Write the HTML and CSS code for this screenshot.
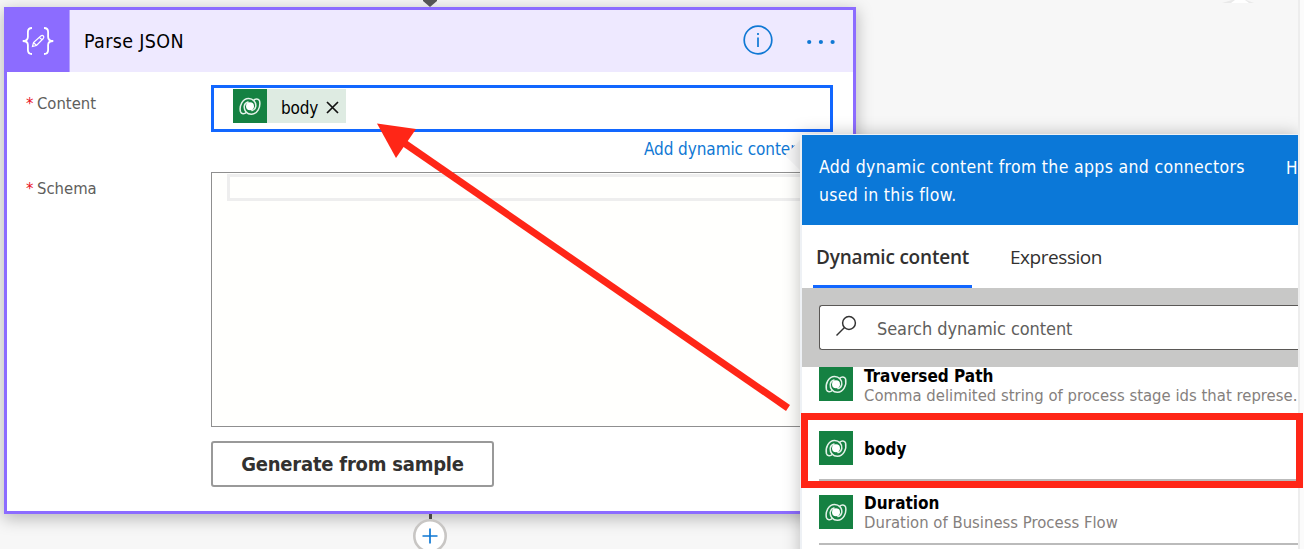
FILE: index.html
```html
<!DOCTYPE html>
<html lang="en">
<head>
<meta charset="utf-8">
<title>Parse JSON</title>
<link rel="stylesheet" href="styles.css">
</head>
<body>
<svg class="defs" width="0" height="0">
  <symbol id="dataverse" viewBox="0 0 34 34">
    <g fill="none" stroke="#e4f2e9" stroke-width="1.5" stroke-linecap="round" stroke-linejoin="round">
      <path id="swirl" d="M13.500 23.200C11.500 25.300 8.300 25.200 7.400 22.500C6.200 16.500 9.500 9.600 15.500 9.400C20 9.300 23.200 13 22.800 17.300C22.500 19.300 21 21 19 21.500"/>
      <use href="#swirl" transform="rotate(180 17 17.3)"/>
    </g>
    <circle cx="17" cy="17.300" r="4" fill="#fff"/>
  </symbol>
</svg>
<main class="canvas">
  <svg class="arrow-in" width="20" height="8" viewBox="0 0 20 8"><path d="M3 0h14v1L10 7 3 1z" fill="#555"/></svg>
  <svg class="arrow-up" width="34" height="3" viewBox="0 0 34 3"><path d="M0 3 10 0h14l8 3z" fill="#e9e9e9"/><path d="M9 3l4-3h10l4 3z" fill="#fff"/></svg>
  <section class="card">
    <header class="card-head">
      <div class="card-icon">
        <svg width="34" height="30" viewBox="0 0 34 30" fill="none" stroke="#fff" stroke-width="1.8">
          <path d="M11 2C7.500 2 6.900 3.500 6.900 6v5c0 2.500-1.500 4-5.200 4 3.700 0 5.200 1.500 5.200 4v5c0 2.500.6 4 4.100 4"/>
          <path d="M23 2c3.500 0 4.100 1.500 4.100 4v5c0 2.500 1.500 4 5.200 4-3.700 0-5.200 1.500-5.200 4v5c0 2.500-.6 4-4.100 4"/>
          <path d="M11.500 20.500l1-4 7.300-6.500c2-1.500 4 .6 2.500 2.500L15.500 19.500zM12.700 16.800l2.600 2.500M18.400 11.300l2.700 2.600" stroke-width="1.200"/>
        </svg>
      </div>
      <h1 class="card-title">Parse JSON</h1>
      <svg class="info" width="30" height="30" viewBox="0 0 30 30"><circle cx="15" cy="15" r="13.800" fill="none" stroke="#0f78d4" stroke-width="1.700"/><path d="M15 12.500v9.500M15 8v2" stroke="#0f78d4" stroke-width="1.700"/></svg>
      <svg class="more" width="30" height="6" viewBox="0 0 30 6" fill="#0f78d4"><circle cx="3.200" cy="3" r="2.100"/><circle cx="14.900" cy="3" r="2.100"/><circle cx="26.600" cy="3" r="2.100"/></svg>
    </header>
    <div class="fields">
      <div class="label first-label"><span class="star">*</span><span>Content</span></div>
      <div>
        <div class="input">
          <div class="token">
            <svg class="dv" width="34" height="34"><use href="#dataverse"/></svg>
            <span class="token-text">body</span>
            <svg width="13" height="13" viewBox="0 0 13 13"><path d="M1 1l11 11M12 1L1 12" stroke="#111" stroke-width="1.700"/></svg>
          </div>
        </div>
        <a class="add-link">Add dynamic content</a>
      </div>
      <div class="label"><span class="star">*</span><span>Schema</span></div>
      <div>
        <div class="schema"><div class="schema-line"></div></div>
        <button class="generate">Generate from sample</button>
      </div>
    </div>
  </section>
  <div class="connector">
    <div class="stem"></div>
    <svg width="34" height="34" viewBox="0 0 34 34"><circle cx="17" cy="17" r="15.700" fill="#fff" stroke="#c8c6c4" stroke-width="2.600"/><path d="M17 9.500v15M9.500 17h15" stroke="#0f78d4" stroke-width="1.700"/></svg>
  </div>

  <svg class="beak" width="18" height="36" viewBox="0 0 18 36"><path d="M18 2v34L1 19.500z" fill="#f7f7f8"/></svg>
  <aside class="panel">
    <div class="panel-head">
      <p class="intro">Add dynamic content from the apps and connectors<br>used in this flow.</p>
      <span class="hide">H</span>
    </div>
    <nav class="tabs">
      <span class="tab active">Dynamic content</span>
      <span class="tab">Expression</span>
    </nav>
    <div class="search-band">
      <div class="search">
        <svg width="22" height="22" viewBox="0 0 22 22" fill="none" stroke="#333" stroke-width="1.500"><circle cx="14" cy="8" r="6.400"/><path d="M9.500 12.500L1.500 20.500"/></svg>
        <span>Search dynamic content</span>
      </div>
    </div>
    <ul class="list">
      <li class="item first">
        <svg class="dv" width="34" height="34"><use href="#dataverse"/></svg>
        <div class="item-text"><b>Traversed Path</b><small>Comma delimited string of process stage ids that represe.</small></div>
      </li>
      <li class="item">
        <svg class="dv" width="34" height="34"><use href="#dataverse"/></svg>
        <div class="item-text"><b>body</b></div>
      </li>
      <li class="item">
        <svg class="dv" width="34" height="34"><use href="#dataverse"/></svg>
        <div class="item-text"><b>Duration</b><small>Duration of Business Process Flow</small></div>
      </li>
    </ul>
  </aside>
</main>
<div class="highlight"></div>
<svg class="pointer" width="1304" height="549" viewBox="0 0 1304 549"><path d="M788 408L402 141.500" stroke="#ff2617" stroke-width="7"/><path d="M377 123.500L416 129 396 158z" fill="#ff2617"/></svg>
</body>
</html>
```
FILE: styles.css
```css
* { box-sizing: border-box; }
body {
  margin: 0;
  width: 1304px;
  height: 549px;
  overflow: hidden;
  position: relative;
  background: #fbfbfb;
  font-family: "DejaVu Sans Condensed", "DejaVu Sans", sans-serif;
  font-stretch: condensed;
}
svg { display: block; flex: none; }
.defs { position: absolute; }
.canvas {
  position: relative;
  width: 1300px;
  height: 549px;
  padding: 7px 0 0 4px;
  overflow: hidden;
  background: #f7f7f7;
  border-right: 2px solid #ededed;
}
.arrow-in { position: absolute; left: 420px; top: 0; }
.arrow-up { position: absolute; left: 1222px; top: 0; }
.card {
  width: 852px;
  height: 507px;
  border: 3px solid #8c6cff;
  background: #fff;
  box-shadow: 0 4px 15px 1px rgba(0, 0, 0, .25);
}
.card-head {
  display: flex;
  align-items: center;
  height: 62px;
  padding-right: 17px;
  background: #eee9ff;
}
.card-icon {
  display: flex;
  align-items: center;
  justify-content: center;
  width: 63px;
  height: 62px;
  background: #8c6cff;
  border-right: 1px solid #b5a0ff;
}
.card-title {
  flex: 1;
  margin: 2px 0 0 14px;
  font-size: 19.500px;
  font-weight: 400;
  line-height: 24px;
  letter-spacing: .35px;
}
.info { margin-top: -2px; }
.more { margin: 1px 0 0 33px; }
.fields {
  display: grid;
  grid-template-columns: 185px 622px;
  row-gap: 12px;
  padding: 13px 0 0 19px;
}
.label {
  display: flex;
  gap: 3px;
  padding-top: 7px;
  font-size: 16.500px;
  line-height: 20px;
  color: #605e5c;
}
.label.first-label { padding-top: 9px; }
.star { width: 8px; color: #e81123; }
.input {
  height: 47px;
  padding: 1px 0 0 19px;
  border: 3px solid #1267ff;
}
.token {
  display: flex;
  align-items: center;
  width: 113px;
  height: 34px;
  background: #deebe2;
}
.token-text { flex: 1; margin: 3px 0 0 14px; font-size: 17px; letter-spacing: -.2px; }
.token svg:last-child { margin: 2px 7px 0 0; }
.dv { background: #158142; }
.add-link {
  display: block;
  height: 28px;
  margin-left: 433px;
  padding-top: 6px;
  font-size: 17px;
  line-height: 22px;
  letter-spacing: -.08px;
  color: #0f78d4;
  white-space: nowrap;
}
.schema {
  height: 255px;
  padding: 1px 0 0 15px;
  border: 1.500px solid #8f8f8f;
  background: #fffffd;
}
.schema-line { height: 27px; border: 3px solid #eee; border-right: 0; }
.generate {
  display: flex;
  align-items: center;
  justify-content: center;
  width: 283px;
  height: 46px;
  margin-top: 14px;
  padding: 0;
  border: 2px solid #999;
  border-radius: 3px;
  background: #fff;
  color: #323130;
  font-family: inherit;
  font-stretch: condensed;
  font-size: 20px;
  font-weight: 700;
  letter-spacing: -.22px;
}
.connector { width: 34px; margin-left: 409px; }
.stem { width: 3px; height: 5px; margin: 0 auto; background: #484644; }
.beak { position: absolute; left: 784px; top: 136px; }
.panel {
  position: absolute;
  left: 800px;
  top: 134px;
  width: 498px;
  height: 430px;
  border: 1px solid #eef1f5;
  border-width: 1px 0 0 2px;
  background: #fff;
  box-shadow: 0 0 16px rgba(0, 0, 0, .25);
  overflow: hidden;
}
.panel-head {
  display: flex;
  align-items: flex-start;
  justify-content: space-between;
  height: 90px;
  padding: 18px 0 0 17px;
  background: #0b78d8;
  color: #fff;
  line-height: 28px;
  font-size: 17.500px;
  letter-spacing: .33px;
  white-space: nowrap;
}
.intro { width: 466px; margin: 0; }
.hide { flex: none; width: 12px; padding-top: 1px; letter-spacing: 0; font-size: 17px; }
.tabs {
  display: flex;
  gap: 38px;
  height: 63px;
  padding: 14px 0 0 11px;
  background: #fff;
  color: #323130;
  font-family: "Open Sans", "Noto Sans", sans-serif;
  font-stretch: normal;
  font-size: 19px;
  line-height: 36px;
  letter-spacing: -.45px;
}
.tab { white-space: nowrap; }
.tab.active { width: 159px; padding-left: 3px; border-bottom: 3px solid #1267ff; font-weight: 600; letter-spacing: -.2px; }
.search-band { height: 79px; padding: 17px 0 0 17px; background: #c8c8c7; }
.search {
  display: flex;
  align-items: center;
  gap: 20px;
  height: 45px;
  padding-left: 15px;
  border: 1.500px solid #5a5856;
  border-right: 0;
  border-radius: 3px 0 0 3px;
  background: #fff;
  color: #605e5c;
  font-size: 18px;
  letter-spacing: -.08px;
  white-space: nowrap;
}
.search span { margin-top: 1px; }
.search svg { margin-top: -4px; }
.list { margin: 0; padding: 0 0 0 17px; list-style: none; }
.item {
  display: flex;
  align-items: center;
  gap: 11px;
  height: 64px;
  border-bottom: 2px solid #bbb;
}
.item.first { height: 50px; padding-bottom: 14px; }
.item-text { display: flex; flex-direction: column; padding-top: 2px; white-space: nowrap; }
.item.first .item-text { padding-top: 3px; }
.item b { font-size: 17px; line-height: 20px; }
.item small { font-size: 16.500px; line-height: 20px; letter-spacing: .02px; color: #85807d; }
.highlight {
  position: absolute;
  left: 801px;
  top: 413px;
  width: 502px;
  height: 75px;
  border: 7px solid #ff2617;
}
.pointer { position: absolute; left: 0; top: 0; }
```
